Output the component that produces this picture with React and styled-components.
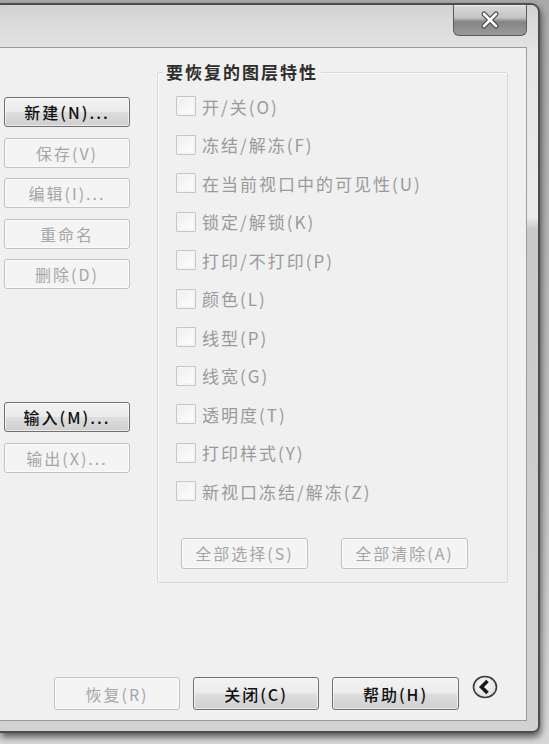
import React from 'react'
import styled, { createGlobalStyle } from 'styled-components'

const GlobalStyle = createGlobalStyle`
  html, body {
    margin: 0;
    padding: 0;
    background: #c9c9c9;
  }
  * {
    box-sizing: border-box;
  }
`

const layerProps = [
  '开/关(O)',
  '冻结/解冻(F)',
  '在当前视口中的可见性(U)',
  '锁定/解锁(K)',
  '打印/不打印(P)',
  '颜色(L)',
  '线型(P)',
  '线宽(G)',
  '透明度(T)',
  '打印样式(Y)',
  '新视口冻结/解冻(Z)',
]

const App = () => {
  return (
    <Page>
      <GlobalStyle />
      <Window>
        <TitleBar>
          <CloseButton aria-label="close">
            <svg width="22" height="20" viewBox="0 0 22 20">
              <path d="M5 4 L17 16 M17 4 L5 16" stroke="#4a4a4a" strokeWidth="5" strokeLinecap="round" />
              <path d="M5 4 L17 16 M17 4 L5 16" stroke="#ffffff" strokeWidth="2.6" strokeLinecap="round" />
            </svg>
          </CloseButton>
        </TitleBar>

        <Client>
          <Main>
            <LeftColumn>
              <ButtonStack>
                <Btn $w={126} $h={30}>新建(N)...</Btn>
                <Btn $w={126} $h={30} disabled>保存(V)</Btn>
                <Btn $w={126} $h={30} disabled>编辑(I)...</Btn>
                <Btn $w={126} $h={30} disabled>重命名</Btn>
                <Btn $w={126} $h={30} disabled>删除(D)</Btn>
              </ButtonStack>
              <ButtonStack $top={113}>
                <Btn $w={126} $h={30}>输入(M)...</Btn>
                <Btn $w={126} $h={30} disabled>输出(X)...</Btn>
              </ButtonStack>
            </LeftColumn>

            <Group>
              <Legend>要恢复的图层特性</Legend>
              <CheckList>
                {layerProps.map((p, i) => (
                  <CheckRow key={i}>
                    <Box />
                    <CheckLabel>{p}</CheckLabel>
                  </CheckRow>
                ))}
              </CheckList>
              <GroupActions>
                <Btn $w={127} $h={31} disabled>全部选择(S)</Btn>
                <Btn $w={127} $h={31} disabled>全部清除(A)</Btn>
              </GroupActions>
            </Group>
          </Main>

          <Footer>
            <Btn $w={126} $h={33} disabled>恢复(R)</Btn>
            <Btn $w={126} $h={33}>关闭(C)</Btn>
            <Btn $w={127} $h={33}>帮助(H)</Btn>
            <Collapse aria-label="collapse">
              <svg width="26" height="24" viewBox="0 0 26 24">
                <defs>
                  <radialGradient id="cg" cx="0.45" cy="0.4" r="0.6">
                    <stop offset="0" stopColor="#ffffff" />
                    <stop offset="1" stopColor="#dcdcdc" />
                  </radialGradient>
                </defs>
                <ellipse cx="13" cy="12" rx="11.5" ry="10.5" fill="url(#cg)" stroke="#3a3a3a" strokeWidth="1.6" />
                <path d="M15.5 6 L9.5 12 L15.5 18" fill="none" stroke="#1a1a1a" strokeWidth="3.6" strokeLinejoin="miter" />
              </svg>
            </Collapse>
          </Footer>
        </Client>
      </Window>
    </Page>
  )
}

export default App

const Page = styled.div`
  width: 549px;
  height: 744px;
  overflow: hidden;
  background: linear-gradient(to bottom, #a9a9a9 0, #bdbdbd 60%, #d8d8d8 100%);
  font-family: "Noto Sans CJK SC", "Noto Sans", sans-serif;
`

const Window = styled.div`
  margin-top: 3px;
  width: 540px;
  height: 730px;
  border: 2px solid #4d4d4d;
  border-left: none;
  border-radius: 0 9px 7px 0;
  background: linear-gradient(to bottom, #e4e4e4 0, #ececec 212px, #c9c9c9 224px, #d2d2d2 100%);
  display: flex;
  flex-direction: column;
  box-shadow: 1px 4px 7px rgba(0, 0, 0, 0.6);
`

const TitleBar = styled.div`
  height: 42px;
  display: flex;
  justify-content: flex-end;
  align-items: flex-start;
  padding-right: 11px;
  border-top-right-radius: 8px;
  background: linear-gradient(to bottom, #d2d2d2 0, #dcdcdc 50%, #e2e2e2 100%);
`

const CloseButton = styled.div`
  width: 74px;
  height: 31px;
  display: flex;
  align-items: center;
  justify-content: center;
  border: 1px solid #5a5a5a;
  border-top: none;
  border-radius: 0 0 6px 6px;
  background: linear-gradient(to bottom, #dadada 0, #c4c4c4 42%, #858585 56%, #9a9a9a 100%);
  box-shadow: inset 0 1px 0 rgba(255, 255, 255, 0.5);
`

const Client = styled.div`
  height: 674px;
  margin-right: 11px;
  border: 1px solid #9c9c9c;
  border-left: none;
  background: #f0f0f0;
  display: flex;
  flex-direction: column;
`

const Main = styled.div`
  display: flex;
  align-items: flex-start;
`

const LeftColumn = styled.div`
  padding: 49px 0 0 4px;
  display: flex;
  flex-direction: column;
`

const ButtonStack = styled.div`
  display: flex;
  flex-direction: column;
  gap: 10.5px;
  margin-top: ${(p) => p.$top || 0}px;
`

const Btn = styled.button`
  width: ${(p) => p.$w}px;
  height: ${(p) => p.$h}px;
  padding: 0;
  font-family: "Noto Sans CJK SC", sans-serif;
  font-size: 16px;
  font-weight: 500;
  letter-spacing: 2px;
  line-height: 1;
  color: #111111;
  border: 1px solid #707070;
  border-radius: 3px;
  background: linear-gradient(to bottom, #f3f3f3 0, #ebebeb 48%, #dddddd 52%, #cfcfcf 100%);
  box-shadow: inset 0 0 0 1px rgba(255, 255, 255, 0.6);

  &:disabled {
    color: #a6a6a6;
    font-weight: 400;
    border-color: #c2c2c2;
    background: #f4f4f4;
    box-shadow: inset 0 0 0 1px #fbfbfb;
  }
`

const Group = styled.fieldset`
  margin: 14px 0 0 27px;
  padding: 0 0 13px 18px;
  width: 351px;
  border: 1px solid #d9d9d9;
  box-shadow: inset 1px 1px 0 #fafafa;
  border-radius: 2px;
`

const Legend = styled.legend`
  margin-left: -13px;
  padding: 0 3px;
  font-size: 17px;
  line-height: 20px;
  font-weight: 700;
  letter-spacing: 2px;
  color: #2e2e2e;
`

const CheckList = styled.div`
  padding-top: 5px;
  display: flex;
  flex-direction: column;
`

const CheckRow = styled.div`
  height: 38.5px;
  display: flex;
  align-items: center;
  gap: 6px;
`

const Box = styled.span`
  width: 20px;
  height: 20px;
  border: 1px solid #c6c6c6;
  border-radius: 1px;
  background: linear-gradient(135deg, #ececec 0, #f7f7f7 50%, #ffffff 100%);
  box-shadow: inset 0 0 0 2px #f4f4f4;
`

const CheckLabel = styled.span`
  font-size: 17px;
  letter-spacing: 2px;
  color: #9a9a9a;
`

const GroupActions = styled.div`
  margin-top: 27px;
  padding-left: 5px;
  display: flex;
  gap: 33px;
`

const Footer = styled.div`
  margin-top: auto;
  padding: 0 28px 10px 0;
  display: flex;
  justify-content: flex-end;
  align-items: center;
  gap: 13px;
`

const Collapse = styled.div`
  width: 26px;
  height: 24px;
  display: flex;
  margin-top: -14px;
`
